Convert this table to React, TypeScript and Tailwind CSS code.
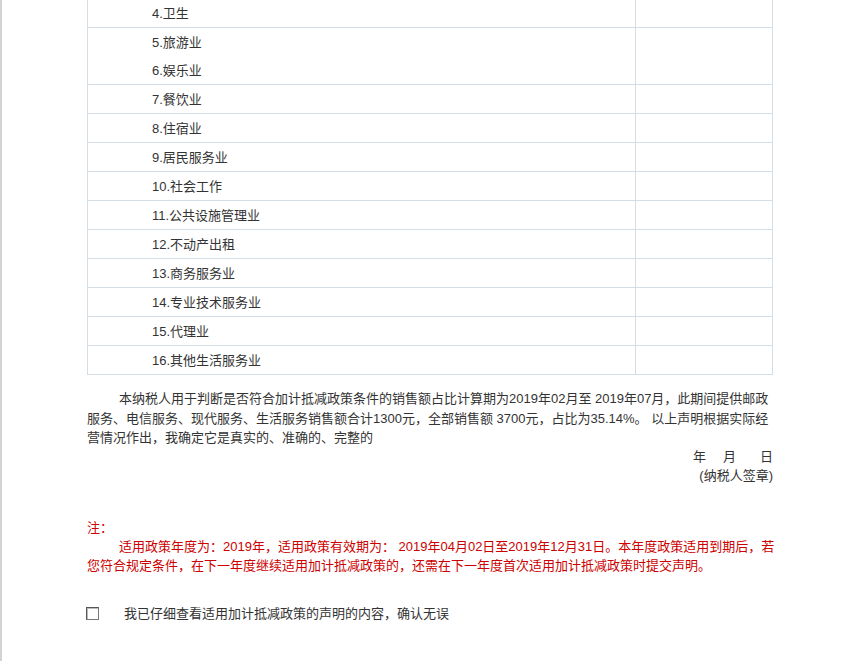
const rows = [
  ["4.卫生"],
  ["5.旅游业", "6.娱乐业"],
  ["7.餐饮业"],
  ["8.住宿业"],
  ["9.居民服务业"],
  ["10.社会工作"],
  ["11.公共设施管理业"],
  ["12.不动产出租"],
  ["13.商务服务业"],
  ["14.专业技术服务业"],
  ["15.代理业"],
  ["16.其他生活服务业"],
];

export default function App() {
  return (
    <div className="min-h-[663px] bg-white border-l-2 border-[#d3d3d3] text-[13px] text-[#333] font-['Liberation_Sans','Noto_Sans_CJK_SC',sans-serif]">
      <div className="ml-[85px] w-[686px] -mt-[2px]">
        <table className="w-full border-collapse">
          <tbody>
            {rows.map((r, i) => (
              <tr key={i}>
                <td className="w-[548px] border border-[#d5dee6] pl-[64px] p-0 align-top">
                  {r.map((t) => (
                    <div key={t} className="h-[28px] leading-[29px]">
                      {t}
                    </div>
                  ))}
                </td>
                <td className="border border-[#d5dee6] p-0"></td>
              </tr>
            ))}
          </tbody>
        </table>

        <div className="mt-[14px] leading-[19.5px]">
          <p className="indent-[32px] whitespace-nowrap">
            本纳税人用于判断是否符合加计抵减政策条件的销售额占比计算期为2019年02月至 2019年07月，此期间提供邮政
            <br />
            服务、电信服务、现代服务、生活服务销售额合计1300元，全部销售额 3700元，占比为35.14%。 以上声明根据实际经
            <br />
            营情况作出，我确定它是真实的、准确的、完整的
          </p>
          <div className="flex justify-end -mt-[1px]">
            <span>年</span>
            <span className="ml-[17px]">月</span>
            <span className="ml-[24px]">日</span>
          </div>
          <div className="text-right">(纳税人签章)</div>
        </div>

        <div className="mt-[32px] text-[#cc0000] leading-[19px]">
          <div>注：</div>
          <p className="indent-[32px] whitespace-nowrap">
            适用政策年度为：2019年，适用政策有效期为： 2019年04月02日至2019年12月31日。本年度政策适用到期后，若
            <br />
            您符合规定条件，在下一年度继续适用加计抵减政策的，还需在下一年度首次适用加计抵减政策时提交声明。
          </p>
        </div>

        <div className="mt-[29px] flex items-center h-[20px]">
          <span className="-ml-[1px] w-[13px] h-[13px] border border-[#777] border-t-[#555] border-l-[#555] bg-white shadow-[inset_1px_1px_0_#bbb]"></span>
          <span className="ml-[25px]">我已仔细查看适用加计抵减政策的声明的内容，确认无误</span>
        </div>
      </div>
    </div>
  );
}
